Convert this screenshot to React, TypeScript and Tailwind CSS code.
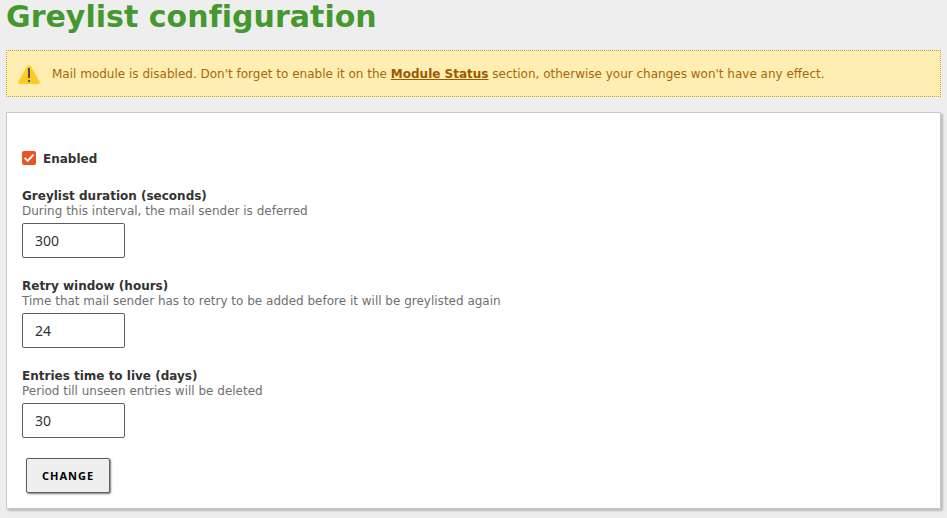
import React, { useState } from "react";

type FieldProps = { id: string; label: string; help: string; initial: string };

function Field({ id, label, help, initial }: FieldProps) {
  const [value, setValue] = useState(initial);
  return (
    <div className="mb-5 flex h-[69px] flex-col items-start">
      <label htmlFor={id} className="h-[15px] text-[12px] leading-[15px] font-bold text-[#333]">{label}</label>
      <span className="h-[15px] text-[12px] leading-[15px] text-[#706f6f]">{help}</span>
      <input
        id={id}
        value={value}
        onChange={(e) => setValue(e.target.value)}
        className="mt-1 h-[35px] w-[103px] shrink-0 rounded-[2px] border border-[#5f5e5e] bg-white px-3 font-['Noto_Sans',sans-serif] text-[14px] text-[#333] outline-none"
      />
    </div>
  );
}

export default function App() {
  const [enabled, setEnabled] = useState(true);
  return (
    <main className="h-[518px] overflow-hidden bg-[#eee] px-1.5 font-['DejaVu_Sans',sans-serif] text-[12px] text-[#333]">
      <h1 className="h-[50px] text-[30px] leading-[33px] font-bold tracking-[0.03px] whitespace-nowrap text-[#45982e]">Greylist configuration</h1>
      <div className="flex h-[47px] w-[935px] items-center border border-dotted border-[#cfa03f] bg-[#feeeb1] pl-[11px] text-[#a9660a]">
        <svg width="22" height="20" viewBox="0 0 22 20" className="mt-[3px] mr-3 shrink-0">
          <path d="M9.2 1.3Q11-0.8 12.8 1.3L21.6 16.6Q22.5 19 20.3 19H1.7Q-.5 19 .4 16.6Z" fill="#ffca28" />
          <path d="M10 3h2v10h-2zM10 15h2v2h-2z" fill="#505050" />
        </svg>
        <p className="whitespace-nowrap">
          Mail module is disabled. Don't forget to enable it on the{" "}
          <a href="#status" className="font-bold text-[#9d5800] underline">Module Status</a>{" "}
          section, otherwise your changes won't have any effect.
        </p>
      </div>
      <form
        onSubmit={(e) => e.preventDefault()}
        className="mt-[15px] h-[397px] w-[935px] border border-[#c8c8c8] bg-white pt-[38px] pl-[15px] shadow-[2px_2px_2px_#bbb]"
      >
        <label className="mb-6 flex h-[14px] items-center gap-[7px] font-bold">
          <input type="checkbox" checked={enabled} onChange={(e) => setEnabled(e.target.checked)} className="peer sr-only" />
          <span className="flex size-[14px] items-center justify-center rounded-[2px] bg-[#e95420]">
            {enabled && (
              <svg width="14" height="14" viewBox="0 0 14 14" fill="none" stroke="white" strokeWidth="2">
                <path d="M2.7 6.9 5.7 9.9 11.5 3.6" />
              </svg>
            )}
          </span>
          <span className="pt-[2px]">Enabled</span>
        </label>
        <div className="flex flex-col gap-px">
          <Field id="duration" label="Greylist duration (seconds)" help="During this interval, the mail sender is deferred" initial="300" />
          <Field id="window" label="Retry window (hours)" help="Time that mail sender has to retry to be added before it will be greylisted again" initial="24" />
          <Field id="ttl" label="Entries time to live (days)" help="Period till unseen entries will be deleted" initial="30" />
        </div>
        <button className="ml-1 flex h-[35px] w-[84px] items-center justify-center rounded-[2px] border border-[#5f5e5e] bg-[#eee] pt-[2px] font-['Noto_Sans',sans-serif] text-[11px] font-bold tracking-[1px] text-black shadow-[1px_1px_2px_#777]">
          CHANGE
        </button>
      </form>
    </main>
  );
}
